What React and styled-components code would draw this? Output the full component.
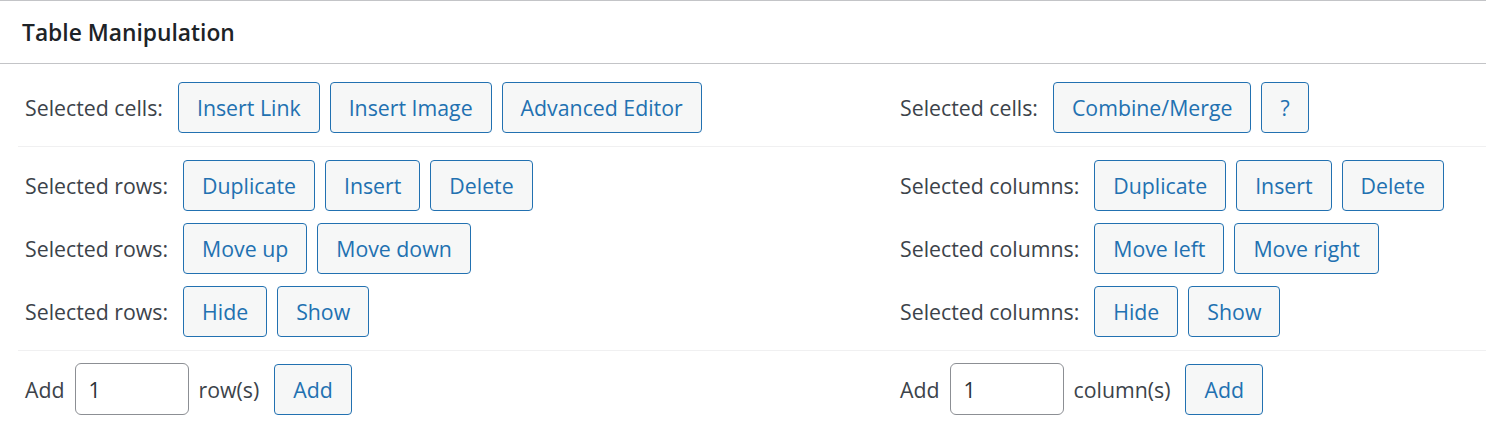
import React from "react"
import styled, { createGlobalStyle } from "styled-components"

const GlobalStyle = createGlobalStyle`
  body {
    margin: 0;
    background: #fff;
    font-family: "Open Sans", "Noto Sans", "Liberation Sans", sans-serif;
    color: #3c434a;
  }
`

const Panel = styled.div`
  background: #fff;
`

const Header = styled.div`
  height: 62px;
  border-top: 1px solid #c3c4c7;
  border-bottom: 1px solid #c3c4c7;
  display: flex;
  align-items: center;
  padding-left: 22px;
`

const Title = styled.h2`
  margin: 0;
  font-size: 22.8px;
  font-weight: 600;
  color: #1d2327;
`

const Body = styled.div`
  margin-left: 18px;
`

const Group = styled.div`
  display: flex;
  flex-direction: column;
  gap: 12px;
  padding: ${(p) => p.$pad || "13px 0"};
  border-bottom: ${(p) => (p.$last ? "none" : "1px solid #f0f0f1")};
`

const Row = styled.div`
  display: grid;
  grid-template-columns: 875px 1fr;
`

const Cell = styled.div`
  display: flex;
  align-items: center;
  gap: 10px;
  padding-left: 7px;
  font-size: 21.3px;
`

const Label = styled.span`
  margin-right: ${(p) => p.$space ?? 5}px;
  white-space: nowrap;
`

const Button = styled.button`
  height: 51px;
  padding: 0 18px;
  border: 1px solid #2271b1;
  border-radius: 4px;
  background: #f6f7f7;
  color: #2271b1;
  font-family: inherit;
  font-size: 21.3px;
  cursor: pointer;
`

const NumberInput = styled.input`
  box-sizing: border-box;
  width: 114px;
  height: 52px;
  padding: 0 13px;
  border: 1px solid #8c8f94;
  border-radius: 6px;
  font-family: inherit;
  font-size: 21.3px;
  color: #2c3338;
  background: #fff;
`

function ActionCell({ label, buttons }) {
  return (
    <Cell>
      <Label>{label}</Label>
      {buttons.map((b) => (
        <Button key={b}>{b}</Button>
      ))}
    </Cell>
  )
}

function AddCell({ unit }) {
  return (
    <Cell>
      <Label $space={0}>Add</Label>
      <NumberInput type="text" defaultValue="1" />
      <Label>{unit}</Label>
      <Button>Add</Button>
    </Cell>
  )
}

export default function App() {
  return (
    <Panel>
      <GlobalStyle />
      <Header>
        <Title>Table Manipulation</Title>
      </Header>
      <Body>
        <Group $pad="18px 0 13px">
          <Row>
            <ActionCell label="Selected cells:" buttons={["Insert Link", "Insert Image", "Advanced Editor"]} />
            <ActionCell label="Selected cells:" buttons={["Combine/Merge", "?"]} />
          </Row>
        </Group>
        <Group>
          <Row>
            <ActionCell label="Selected rows:" buttons={["Duplicate", "Insert", "Delete"]} />
            <ActionCell label="Selected columns:" buttons={["Duplicate", "Insert", "Delete"]} />
          </Row>
          <Row>
            <ActionCell label="Selected rows:" buttons={["Move up", "Move down"]} />
            <ActionCell label="Selected columns:" buttons={["Move left", "Move right"]} />
          </Row>
          <Row>
            <ActionCell label="Selected rows:" buttons={["Hide", "Show"]} />
            <ActionCell label="Selected columns:" buttons={["Hide", "Show"]} />
          </Row>
        </Group>
        <Group $pad="12px 0" $last>
          <Row>
            <AddCell unit="row(s)" />
            <AddCell unit="column(s)" />
          </Row>
        </Group>
      </Body>
    </Panel>
  )
}
